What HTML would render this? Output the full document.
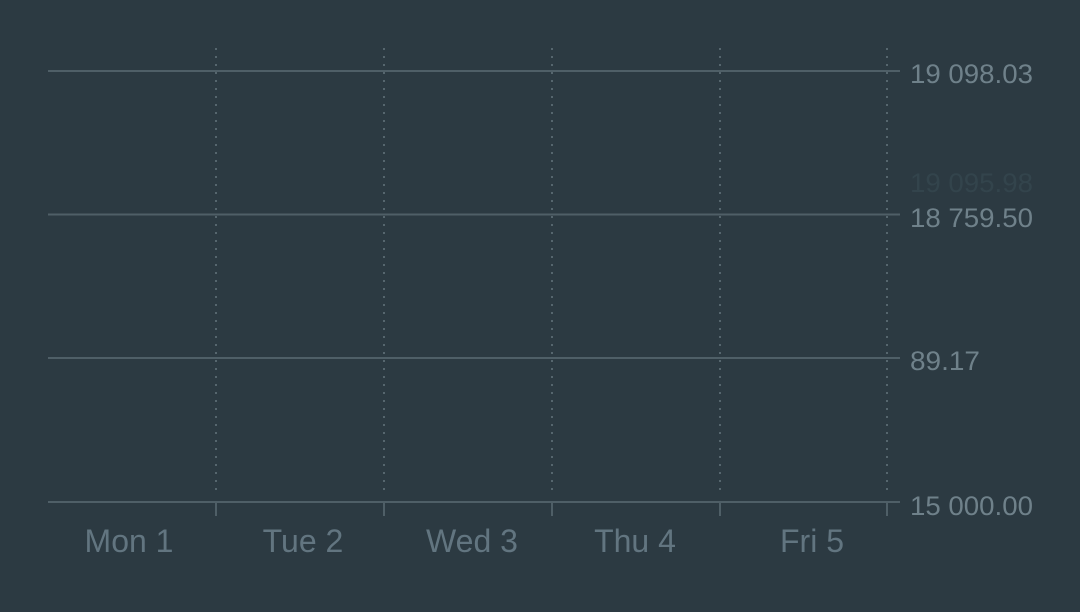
<!DOCTYPE html>
<html><head><style>
html,body{margin:0;padding:0;background:#2c3a42;width:1080px;height:612px;overflow:hidden}
svg text{font-family:"Liberation Sans",sans-serif}
</style></head><body>
<svg width="1080" height="612" xmlns="http://www.w3.org/2000/svg">
<rect width="1080" height="612" fill="#2c3a42"/>
<g stroke="#56666e" stroke-width="2" stroke-dasharray="2,6">
<line x1="216" y1="48" x2="216" y2="492"/>
<line x1="384" y1="48" x2="384" y2="492"/>
<line x1="552" y1="48" x2="552" y2="492"/>
<line x1="720" y1="48" x2="720" y2="492"/>
<line x1="887" y1="48" x2="887" y2="492"/>
</g>
<g stroke="#4f5f67" stroke-width="2">
<line x1="48" y1="71" x2="900" y2="71"/>
<line x1="48" y1="214.5" x2="900" y2="214.5"/>
<line x1="48" y1="358" x2="900" y2="358"/>
<line x1="48" y1="502" x2="900" y2="502"/>
<line x1="216" y1="502" x2="216" y2="516"/>
<line x1="384" y1="502" x2="384" y2="516"/>
<line x1="552" y1="502" x2="552" y2="516"/>
<line x1="720" y1="502" x2="720" y2="516"/>
<line x1="887" y1="502" x2="887" y2="516"/>
</g>
<g fill="#6f818a" font-size="27">
<text x="910" y="83" textLength="123" lengthAdjust="spacingAndGlyphs">19 098.03</text>
<text x="910" y="192" fill="#33444c" textLength="123" lengthAdjust="spacingAndGlyphs">19 095.98</text>
<text x="910" y="227" textLength="123" lengthAdjust="spacingAndGlyphs">18 759.50</text>
<text x="910" y="370" textLength="70" lengthAdjust="spacingAndGlyphs">89.17</text>
<text x="910" y="515" textLength="123" lengthAdjust="spacingAndGlyphs">15 000.00</text>
</g>
<g fill="#627580" font-size="32" text-anchor="middle">
<text x="129" y="552">Mon 1</text>
<text x="303" y="552">Tue 2</text>
<text x="472" y="552">Wed 3</text>
<text x="635" y="552">Thu 4</text>
<text x="812" y="552">Fri 5</text>
</g>
</svg>
</body></html>
